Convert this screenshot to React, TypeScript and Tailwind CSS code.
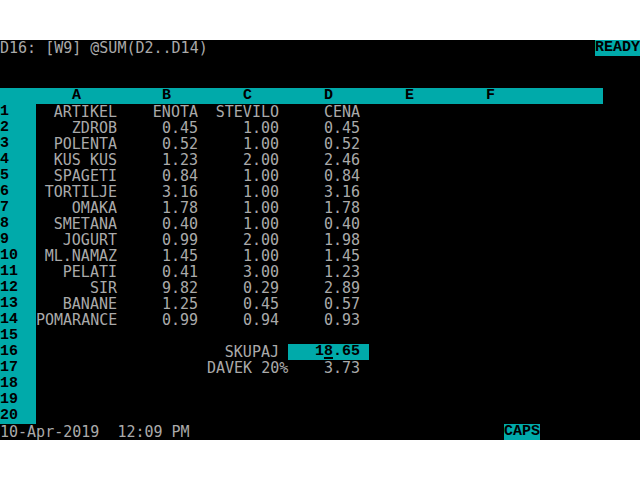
const mono = "font-['DejaVu_Sans_Mono','Liberation_Mono',monospace]";
const bold = "font-['Liberation_Mono','DejaVu_Sans_Mono',monospace] font-bold text-black";

type Line = { a?: string; b?: string; c?: string; d?: string };

const lines: Line[] = [
  { a: "ARTIKEL", b: "ENOTA", c: "STEVILO", d: "CENA" },
  { a: "ZDROB", b: "0.45", c: "1.00", d: "0.45" },
  { a: "POLENTA", b: "0.52", c: "1.00", d: "0.52" },
  { a: "KUS KUS", b: "1.23", c: "2.00", d: "2.46" },
  { a: "SPAGETI", b: "0.84", c: "1.00", d: "0.84" },
  { a: "TORTILJE", b: "3.16", c: "1.00", d: "3.16" },
  { a: "OMAKA", b: "1.78", c: "1.00", d: "1.78" },
  { a: "SMETANA", b: "0.40", c: "1.00", d: "0.40" },
  { a: "JOGURT", b: "0.99", c: "2.00", d: "1.98" },
  { a: "ML.NAMAZ", b: "1.45", c: "1.00", d: "1.45" },
  { a: "PELATI", b: "0.41", c: "3.00", d: "1.23" },
  { a: "SIR", b: "9.82", c: "0.29", d: "2.89" },
  { a: "BANANE", b: "1.25", c: "0.45", d: "0.57" },
  { a: "POMARANCE", b: "0.99", c: "0.94", d: "0.93" },
  {},
  { c: "SKUPAJ" },
  { c: "DAVEK 20%", d: "3.73" },
  {},
  {},
  {},
];

function DataRow({ n, line }: { n: number; line: Line }) {
  const cell = "h-[16px] shrink-0 text-right whitespace-pre text-[#aaaaaa]";
  return (
    <div className="flex h-[16px]">
      <div className={`w-[36px] h-[16px] shrink-0 bg-[#00aaaa] ${bold}`}>{n}</div>
      <div className={`w-[90px] pr-[9px] ${cell}`}>{line.a}</div>
      <div className={`w-[81px] pr-[9px] ${cell}`}>{line.b}</div>
      <div className={`w-[81px] ${n === 17 ? "pr-0" : "pr-[9px]"} ${cell}`}>{line.c}</div>
      {n === 16 ? (
        <div className={`w-[81px] h-[16px] shrink-0 pr-[9px] text-right bg-[#00aaaa] ${bold}`}>
          1<span className="underline decoration-2 underline-offset-2">8</span>.65
        </div>
      ) : (
        <div className={`w-[81px] pr-[9px] ${cell}`}>{line.d}</div>
      )}
    </div>
  );
}

export default function App() {
  return (
    <div className="w-[640px] h-[480px] bg-white flex flex-col justify-center">
      <div className={`h-[400px] bg-black text-[15px] leading-[16px] ${mono}`}>
        <div className="flex h-[16px] justify-between">
          <span className="whitespace-pre text-[#aaaaaa]">D16: [W9] @SUM(D2..D14)</span>
          <span className={`w-[45px] bg-[#00aaaa] ${bold}`}>READY</span>
        </div>
        <div className="h-[32px]" />
        <div className={`flex h-[16px] w-[603px] bg-[#00aaaa] ${bold}`}>
          <div className="w-[36px] shrink-0" />
          <div className="w-[90px] shrink-0 pl-[36px]">A</div>
          <div className="w-[81px] shrink-0 pl-[36px]">B</div>
          <div className="w-[81px] shrink-0 pl-[36px]">C</div>
          <div className="w-[81px] shrink-0 pl-[36px]">D</div>
          <div className="w-[81px] shrink-0 pl-[36px]">E</div>
          <div className="w-[81px] shrink-0 pl-[36px]">F</div>
        </div>
        {lines.map((line, i) => (
          <DataRow key={i} n={i + 1} line={line} />
        ))}
        <div className="flex h-[16px]">
          <div className="w-[504px] shrink-0 whitespace-pre text-[#aaaaaa]">10-Apr-2019  12:09 PM</div>
          <div className={`w-[36px] shrink-0 bg-[#00aaaa] ${bold}`}>CAPS</div>
        </div>
      </div>
    </div>
  );
}
